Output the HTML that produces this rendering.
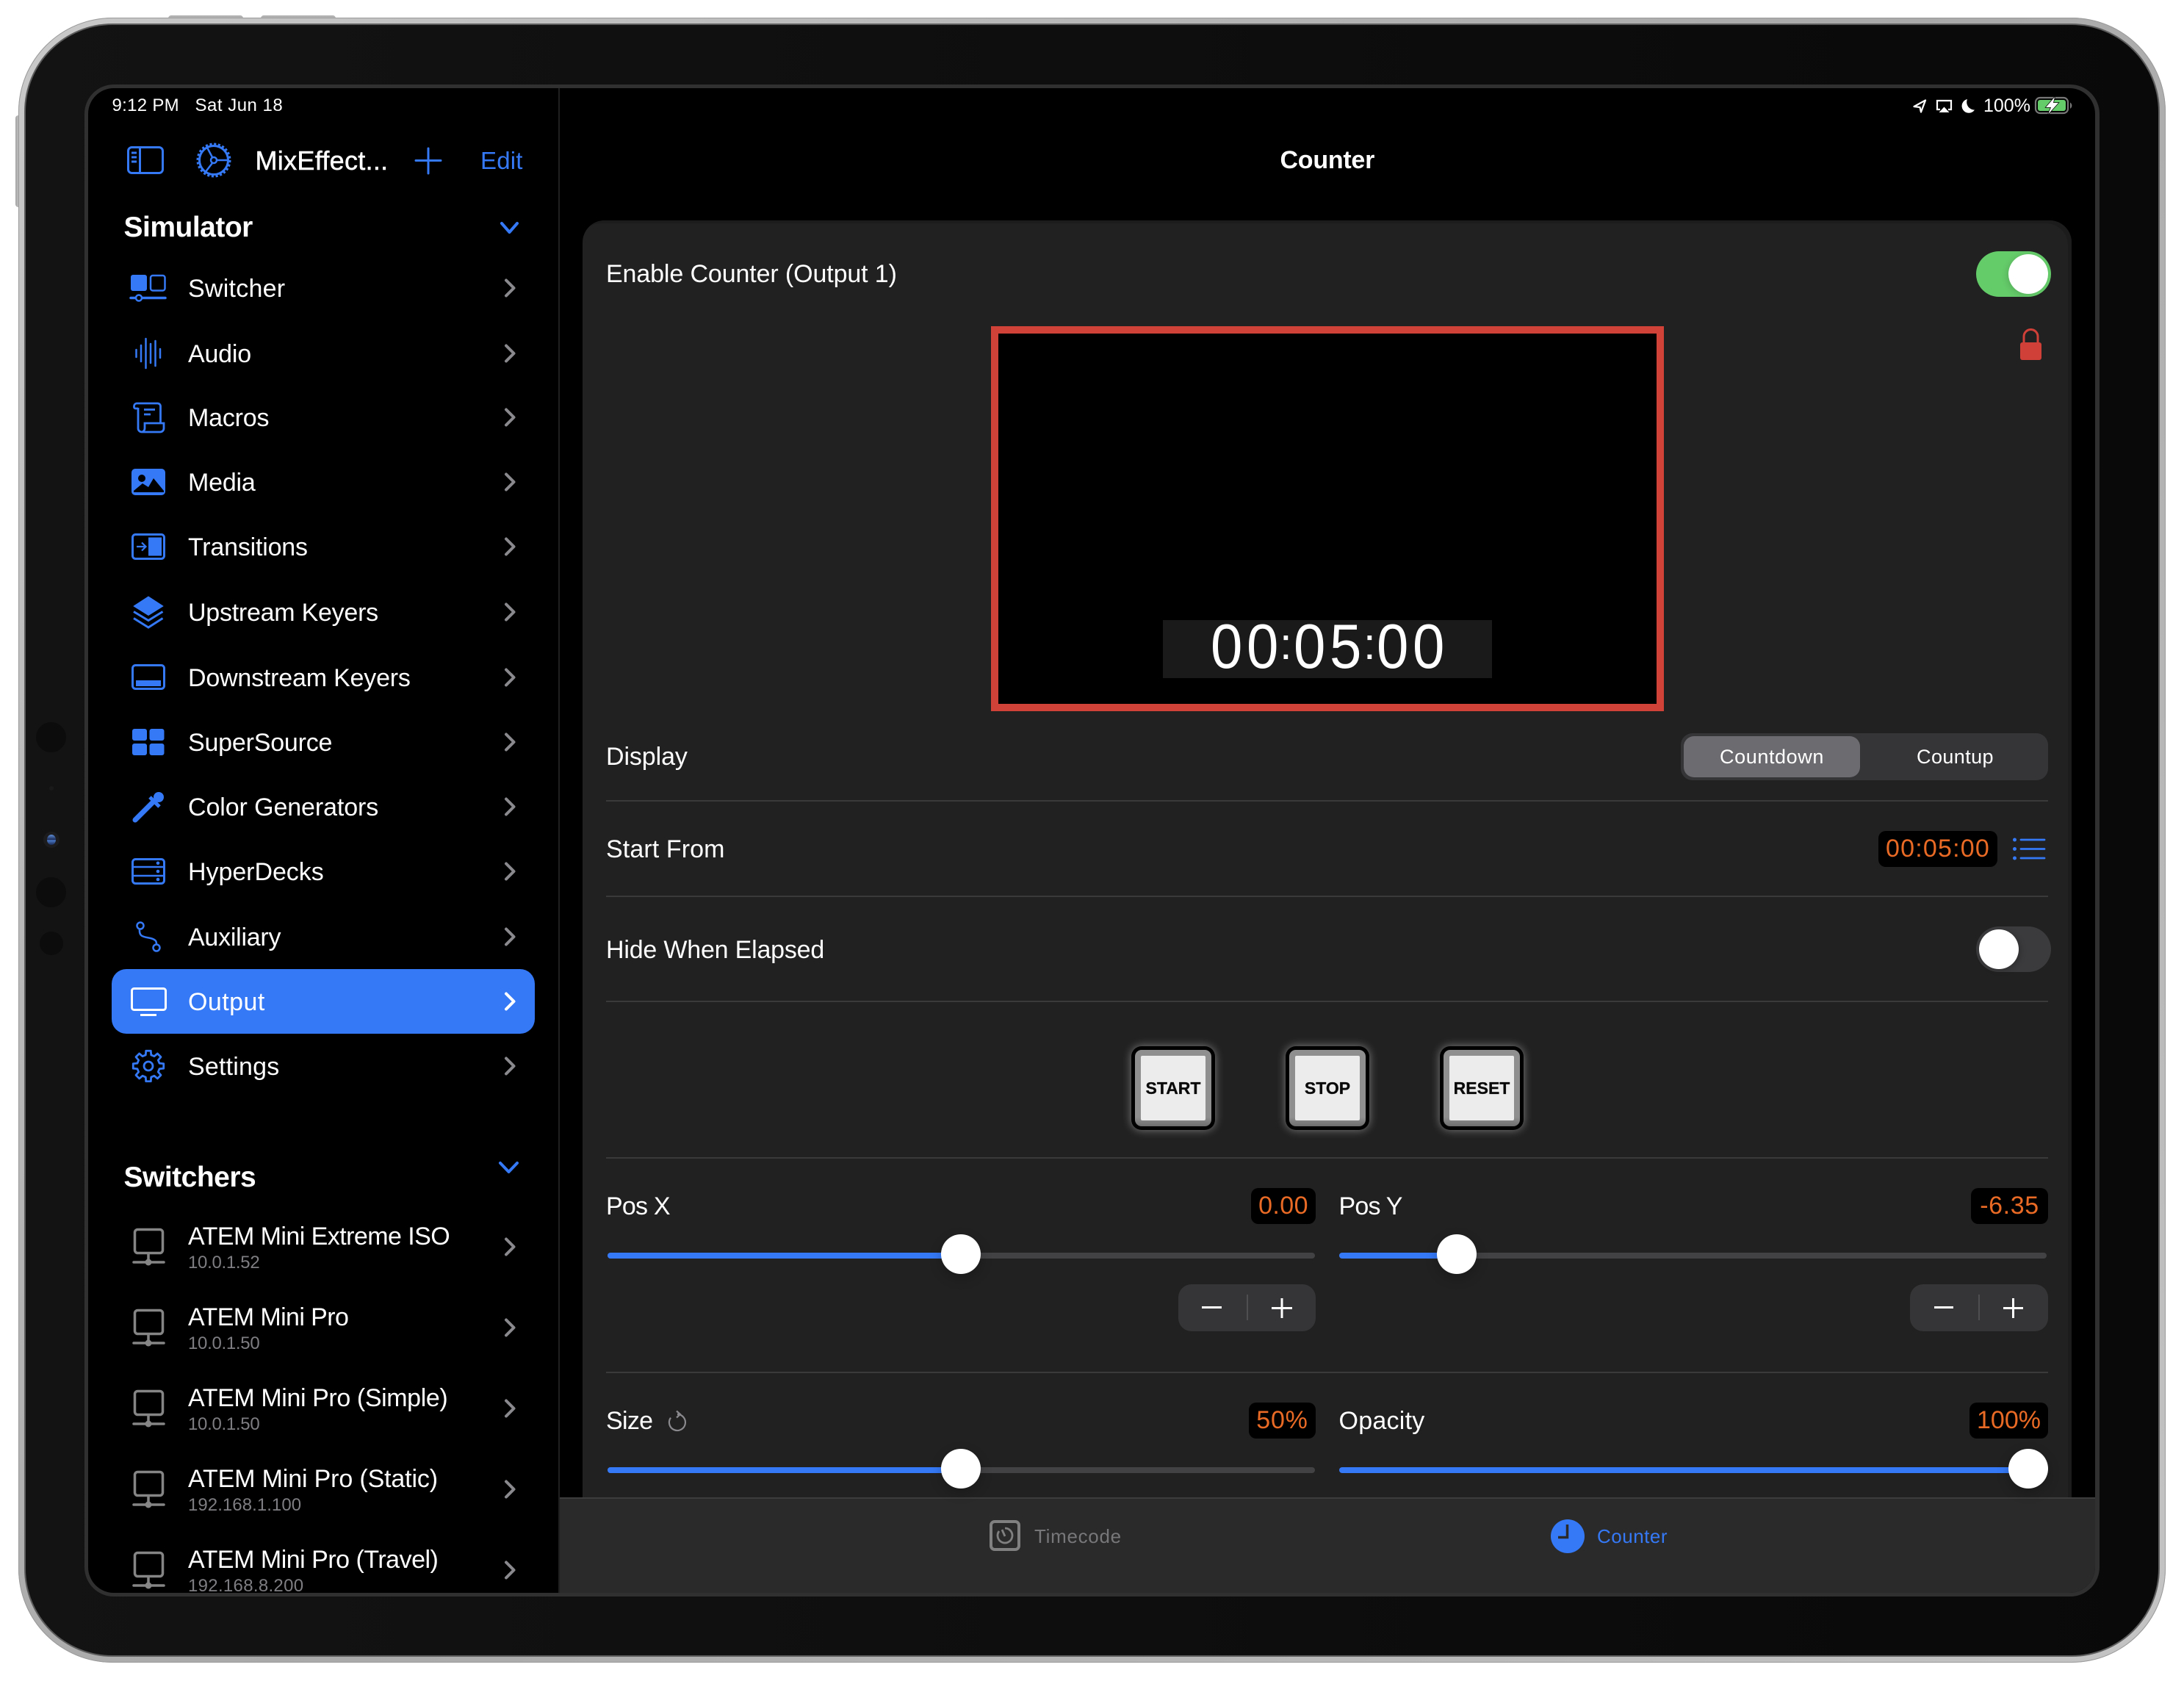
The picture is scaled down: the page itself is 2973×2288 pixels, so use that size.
<!DOCTYPE html>
<html lang="en"><head><meta charset="utf-8"><title>Counter</title>
<style>
html,body{margin:0;padding:0;background:#fff;width:2973px;height:2288px;overflow:hidden}
#r{position:relative;width:2973px;height:2288px;overflow:hidden;background:#fff;font-family:"Liberation Sans",sans-serif;color:#fff}
#r div,#r span{position:absolute;box-sizing:border-box}
.t{white-space:nowrap;line-height:40px;height:40px;font-size:34px}
.s{letter-spacing:-.2px;left:256px}
.sub{white-space:nowrap;line-height:30px;height:30px;font-size:24px;color:#7e7e82;left:256px;letter-spacing:-.3px}
.h{font-weight:700;font-size:39px;letter-spacing:-.5px;left:168.500px;line-height:50px;height:50px;white-space:nowrap}
.sep{height:2px;background:#3a3a3a;left:825px;width:1963px}
.f{background:#000;border-radius:10px;color:#e96a25;font-size:34px;height:49px;line-height:49px;text-align:center;white-space:nowrap}
.tr{height:8px;background:#424244;border-radius:4px}
.fl{height:8px;background:#3579f6;border-radius:4px 0 0 4px}
.k{width:54px;height:54px;background:#fff;border-radius:50%;box-shadow:0 6px 16px rgba(0,0,0,.22)}
.b{top:1424px;width:114px;height:114px;background:#000;border-radius:14px;box-shadow:0 0 12px rgba(255,255,255,.42)}
.b i{position:absolute;left:5px;top:5px;width:104px;height:104px;border-radius:9px;background:linear-gradient(#8f8f8f 88%,#6d6d6d);display:block}
.b b{position:absolute;left:13px;top:13px;width:88px;height:88px;background:#ececec;border-radius:2px;color:#0a0a0a;font-size:23px;line-height:88px;text-align:center;display:block;-webkit-text-stroke:.3px #0a0a0a}
.st{top:1748px;height:64px;background:#353537;border-radius:18px}
</style></head><body>
<div id="r">
<!-- hardware buttons -->
<div style="left:229px;top:21px;width:102px;height:7px;background:linear-gradient(#a8a8a8,#d0d0d0);border-radius:4px 4px 0 0"></div>
<div style="left:355px;top:21px;width:102px;height:7px;background:linear-gradient(#a8a8a8,#d0d0d0);border-radius:4px 4px 0 0"></div>
<div style="left:21px;top:157px;width:7px;height:125px;background:linear-gradient(90deg,#a4a4a4,#cfcfcf);border-radius:4px 0 0 4px"></div>
<!-- device shell -->
<div style="left:25px;top:24px;width:2923px;height:2239px;border-radius:128px;background:linear-gradient(135deg,#c9c9c9,#a9a9a9 50%,#c4c4c4);box-shadow:inset 0 0 0 1px #9a9a9a"></div>
<div style="left:33px;top:32px;width:2907px;height:2223px;border-radius:120px;background:#5c5c5c"></div>
<div style="left:35px;top:34px;width:2903px;height:2219px;border-radius:118px;background:linear-gradient(90deg,#131313,#0e0e0e 50%,#090909)"></div>
<!-- camera strip -->
<div style="left:49px;top:983px;width:41px;height:41px;border-radius:50%;background:#0c0c0c"></div>
<div style="left:67px;top:1070px;width:6px;height:6px;border-radius:50%;background:#1a1a1a"></div>
<div style="left:59px;top:1132px;width:22px;height:22px;border-radius:50%;background:#1c1c1e"></div>
<div style="left:64px;top:1136px;width:12px;height:14px;border-radius:50%;background:linear-gradient(#5f8fd8,#1b2b55 48%,#4a78c6 56%,#1b2b55)"></div>
<div style="left:49px;top:1194px;width:41px;height:41px;border-radius:50%;background:#0c0c0c"></div>
<div style="left:54px;top:1268px;width:32px;height:32px;border-radius:50%;background:#0c0c0c"></div>
<!-- screen ring -->
<div style="left:115px;top:115px;width:2743px;height:2058px;border-radius:40px;background:#303030"></div>
<div id="scr" style="left:120px;top:120px;width:2732px;height:2048px;border-radius:35px;background:#000;overflow:hidden">
  <div style="left:640px;top:0;width:2px;height:2048px;background:#1f1f1f"></div>
  <div style="left:32px;top:1199px;width:576px;height:88px;border-radius:20px;background:#3579f6"></div>
  <div style="left:673px;top:180px;width:2027px;height:1800px;border-radius:30px;background:#212121;box-shadow:inset -5px 4px 0 #1c1c1c"></div>
  <div style="left:642px;top:1918px;width:2090px;height:130px;background:#2a2a2a;border-top:2px solid #3c3c3c"></div>
</div>
<!-- preview -->
<div style="left:1349px;top:444px;width:916px;height:524px;background:#000;border:10px solid #d04138"></div>
<div style="left:1583px;top:844px;width:448px;height:79px;background:#1a1a1a"></div>
<!-- switches -->
<div style="left:2690px;top:342px;width:102px;height:62px;border-radius:31px;background:#65cc6a"></div>
<div style="left:2734px;top:346px;width:54px;height:54px;border-radius:50%;background:#fff;box-shadow:-3px 2px 8px rgba(0,0,0,.12)"></div>
<div style="left:2690px;top:1261px;width:102px;height:62px;border-radius:31px;background:#3b3b3d"></div>
<div style="left:2694px;top:1265px;width:54px;height:54px;border-radius:50%;background:#fff;box-shadow:3px 2px 8px rgba(0,0,0,.2)"></div>
<!-- segmented -->
<div style="left:2288px;top:998px;width:500px;height:64px;border-radius:16px;background:#353538"></div>
<div style="left:2292px;top:1002px;width:240px;height:56px;border-radius:14px;background:#6c6c70"></div>
<!-- separators -->
<div class="sep" style="top:1089px"></div>
<div class="sep" style="top:1219px"></div>
<div class="sep" style="top:1362px"></div>
<div class="sep" style="top:1575px"></div>
<div class="sep" style="top:1867px"></div>
<!-- action buttons -->
<div class="b" style="left:1540px"><i></i><b>START</b></div>
<div class="b" style="left:1750px"><i></i><b>STOP</b></div>
<div class="b" style="left:1960px"><i></i><b>RESET</b></div>
<!-- sliders -->
<div class="tr" style="left:827px;top:1705px;width:963px"></div>
<div class="fl" style="left:827px;top:1705px;width:470px"></div>
<div class="k" style="left:1281px;top:1680px"></div>
<div class="tr" style="left:1823px;top:1705px;width:963px"></div>
<div class="fl" style="left:1823px;top:1705px;width:150px"></div>
<div class="k" style="left:1956px;top:1680px"></div>
<div class="st" style="left:1604px;width:187px"></div>
<div class="st" style="left:2600px;width:188px"></div>
<div class="tr" style="left:827px;top:1997px;width:963px"></div>
<div class="fl" style="left:827px;top:1997px;width:470px"></div>
<div class="k" style="left:1281px;top:1972px"></div>
<div class="fl" style="left:1823px;top:1997px;width:930px"></div>
<div class="k" style="left:2734px;top:1972px"></div>
<!-- value fields -->
<div class="f" style="left:2557px;top:1131px;width:162px;letter-spacing:1.200px">00:05:00</div>
<div class="f" style="left:1703px;top:1617px;width:88px;letter-spacing:.4px">0.00</div>
<div class="f" style="left:2683px;top:1617px;width:105px;letter-spacing:.6px">-6.35</div>
<div class="f" style="left:1700px;top:1909px;width:91px;letter-spacing:.8px">50%</div>
<div class="f" style="left:2681px;top:1909px;width:107px">100%</div>
<!-- icons -->
<svg style="position:absolute;left:0;top:0" width="2973" height="2288" viewBox="0 0 2973 2288" fill="none">
<g stroke="#3579f6" stroke-width="3">
 <rect x="174.500" y="200.500" width="47" height="35" rx="5"/>
 <path d="M190.500 200V236M179 208H186M179 214H186M179 220H186"/>
 <circle cx="291" cy="218" r="19.500"/>
 <circle cx="291" cy="218" r="21.500" stroke-width="4" stroke-dasharray="3 2.630"/>
 <circle cx="291" cy="218" r="4" stroke-width="2.500"/>
 <path d="M295 218H311M289 214L281 199M289 222L279 235" stroke-width="2.500"/>
 <path d="M583 202V236M566 218.500H600" stroke-linecap="round"/>
 <path d="M683 304L693.500 316L704 304" stroke-width="4" stroke-linecap="round" stroke-linejoin="round"/>
 <path d="M681 1583L692.500 1595L704 1583" stroke-width="4" stroke-linecap="round" stroke-linejoin="round"/>
</g>
<!-- switcher -->
<rect x="178" y="374" width="22" height="22" rx="3" fill="#3579f6"/>
<rect x="205" y="375" width="19.500" height="20.500" rx="3" stroke="#3579f6" stroke-width="2.500"/>
<path d="M178 405.500H225" stroke="#3579f6" stroke-width="3.500" stroke-linecap="round"/>
<circle cx="189" cy="405.500" r="4" fill="#000" stroke="#3579f6" stroke-width="2.500"/>
<!-- audio -->
<path d="M185.500 476V486M192 470V492M198.500 461V501M205 468V494M211.500 464V498M218 475V487" stroke="#3579f6" stroke-width="2.500" stroke-linecap="round"/>
<!-- macros -->
<path d="M188 555V583A5 5 0 0 0 193 588H218A5 5 0 0 0 223 583V576H197V583A5 5 0 0 1 193 588M218.500 576V553A4 4 0 0 0 214.500 549H186A4 4 0 0 0 182.500 553V554A2 2 0 0 0 184.500 556H188M196 557.500H211M196 564H205" stroke="#3579f6" stroke-width="2.800"/>
<!-- media -->
<rect x="179" y="638" width="46" height="36" rx="5" fill="#3579f6"/>
<circle cx="193" cy="651" r="5" fill="#000"/>
<path d="M182 668L194 658L202 663L209 651L223 668V670H182Z" fill="#000"/>
<!-- transitions -->
<rect x="180.500" y="727.500" width="43" height="33" rx="4" stroke="#3579f6" stroke-width="3"/>
<rect x="202" y="731.500" width="18" height="25" fill="#3579f6"/>
<path d="M186 744H198M193 738.500L198.500 744L193 749.500" stroke="#3579f6" stroke-width="2.200"/>
<!-- upstream -->
<path d="M202 812L222 825L202 837.500L182 825Z" fill="#3579f6" stroke="#3579f6" stroke-linejoin="round"/>
<path d="M182 832.500L202 844.500L221.500 832.500M182 841.500L202 854L221.500 841.500" stroke="#3579f6" stroke-width="3"/>
<!-- downstream -->
<rect x="180.500" y="905.500" width="43" height="32" rx="4" stroke="#3579f6" stroke-width="3"/>
<rect x="185" y="926" width="34" height="8" fill="#3579f6"/>
<!-- supersource -->
<g fill="#3579f6"><rect x="180" y="992" width="20" height="16" rx="3"/><rect x="203.500" y="992" width="20" height="16" rx="3"/><rect x="180" y="1012" width="20" height="16" rx="3"/><rect x="203.500" y="1012" width="20" height="16" rx="3"/></g>
<!-- eyedropper -->
<path d="M184 1116L207 1093" stroke="#3579f6" stroke-width="7" stroke-linecap="round"/>
<circle cx="216" cy="1085" r="7" fill="#3579f6"/>
<path d="M204 1085L217 1098" stroke="#3579f6" stroke-width="5"/>
<!-- hyperdecks -->
<rect x="180.500" y="1169.500" width="43" height="33" rx="4" stroke="#3579f6" stroke-width="3"/>
<path d="M180 1180H224M180 1192H224" stroke="#3579f6" stroke-width="2.500"/>
<g fill="#3579f6"><circle cx="215" cy="1174.800" r="2.300"/><circle cx="215" cy="1186" r="2.300"/><circle cx="215" cy="1197" r="2.300"/></g>
<!-- auxiliary -->
<circle cx="191" cy="1260" r="4.500" stroke="#3579f6" stroke-width="2.500"/>
<circle cx="213" cy="1290" r="4.500" stroke="#3579f6" stroke-width="2.500"/>
<path d="M190 1265C189 1276 197 1275 205 1277C212 1279 213 1281 213 1285" stroke="#3579f6" stroke-width="2.500"/>
<!-- output -->
<rect x="179.500" y="1345.500" width="46" height="29" rx="3" stroke="#fff" stroke-width="3"/>
<path d="M191 1381.500H213" stroke="#fff" stroke-width="3"/>
<!-- settings gear -->
<g transform="translate(202 1451)" stroke="#3579f6" stroke-width="2.800" stroke-linejoin="round">
 <polygon points="-3.750,-15.040 -3.290,-20.740 3.290,-20.740 3.750,-15.040 7.980,-13.290 12.340,-16.990 16.990,-12.340 13.290,-7.980 15.040,-3.750 20.740,-3.290 20.740,3.290 15.040,3.750 13.290,7.980 16.990,12.340 12.340,16.990 7.980,13.290 3.750,15.040 3.290,20.740 -3.290,20.740 -3.750,15.040 -7.980,13.290 -12.340,16.990 -16.990,12.340 -13.290,7.980 -15.040,3.750 -20.740,3.290 -20.740,-3.290 -15.040,-3.750 -13.290,-7.980 -16.990,-12.340 -12.340,-16.990 -7.980,-13.290"/>
 <circle r="6"/>
</g>
<!-- chevrons -->
<path d="M689 381.500L699.500 392L689 402.500M689 470.500L699.500 481L689 491.500M689 557.500L699.500 568L689 578.500M689 645.500L699.500 656L689 666.500M689 733.500L699.500 744L689 754.500M689 822.500L699.500 833L689 843.500M689 911.500L699.500 922L689 932.500M689 999.500L699.500 1010L689 1020.500M689 1087.500L699.500 1098L689 1108.500M689 1175.500L699.500 1186L689 1196.500M689 1264.500L699.500 1275L689 1285.500M689 1440.500L699.500 1451L689 1461.500M689 1686.500L699.500 1697L689 1707.500M689 1796.500L699.500 1807L689 1817.500M689 1906.500L699.500 1917L689 1927.500M689 2016.500L699.500 2027L689 2037.500M689 2126.500L699.500 2137L689 2147.500" stroke="#8a8a8e" stroke-width="4" stroke-linecap="round" stroke-linejoin="round"/>
<path d="M689 1352.500L699.500 1363L689 1373.500" stroke="#fff" stroke-width="4" stroke-linecap="round" stroke-linejoin="round"/>
<!-- network icons -->
<g stroke="#858585" stroke-width="3.500">
 <rect x="183.500" y="1673.500" width="38" height="32" rx="4"/><path d="M202 1706V1718M182 1718H223" stroke-linecap="round"/>
 <rect x="183.500" y="1783.500" width="38" height="32" rx="4"/><path d="M202 1816V1828M182 1828H223" stroke-linecap="round"/>
 <rect x="183.500" y="1893.500" width="38" height="32" rx="4"/><path d="M202 1926V1938M182 1938H223" stroke-linecap="round"/>
 <rect x="183.500" y="2003.500" width="38" height="32" rx="4"/><path d="M202 2036V2048M182 2048H223" stroke-linecap="round"/>
 <rect x="183.500" y="2113.500" width="38" height="32" rx="4"/><path d="M202 2146V2158M182 2158H223" stroke-linecap="round"/>
</g>
<g fill="#858585"><circle cx="202" cy="1718" r="4.500"/><circle cx="202" cy="1828" r="4.500"/><circle cx="202" cy="1938" r="4.500"/><circle cx="202" cy="2048" r="4.500"/><circle cx="202" cy="2158" r="4.500"/></g>
<!-- status icons -->
<path d="M2621 136.500L2605.500 145L2613.500 146L2615 152.500Z" stroke="#fff" stroke-width="2.300" stroke-linejoin="round"/>
<path d="M2641 149H2637V137H2656V149H2652" stroke="#fff" stroke-width="2.200"/>
<path d="M2646.500 145.500L2653.500 153H2639.500Z" fill="#fff"/>
<path d="M2678 135A9.500 9.500 0 1 0 2688 149.500A10.500 10.500 0 0 1 2678 135Z" fill="#fff"/>
<rect x="2771" y="133" width="44" height="21" rx="6" stroke="#777" stroke-width="2.200"/>
<rect x="2774" y="136" width="38" height="15" rx="3" fill="#65cc6a"/>
<path d="M2818 139.500A5 5 0 0 1 2818 148Z" fill="#777"/>
<path d="M2797 132L2785 146H2792L2788 155.500L2802 140H2795Z" fill="#fff" stroke="#000" stroke-width="1.500" paint-order="stroke"/>
<!-- lock -->
<rect x="2750" y="466" width="29" height="24" rx="3" fill="#d04038"/>
<path d="M2755 467V458A9.500 9.500 0 0 1 2774 458V467" stroke="#d04038" stroke-width="3"/>
<!-- list icon -->
<g fill="#3579f6"><circle cx="2742.500" cy="1143" r="2.500"/><circle cx="2742.500" cy="1155.500" r="2.500"/><circle cx="2742.500" cy="1168" r="2.500"/></g>
<path d="M2751 1143H2783M2751 1155.500H2783M2751 1168H2783" stroke="#3579f6" stroke-width="2.800" stroke-linecap="round"/>
<!-- steppers -->
<path d="M1636 1779.500H1663M1731 1780.500H1759M1745 1767V1794M2633 1779.500H2659M2727 1780.500H2754M2740.500 1767V1794" stroke="#fff" stroke-width="3"/>
<path d="M1698 1762V1797M2694 1762V1797" stroke="#565658" stroke-width="1.500"/>
<!-- reset icon -->
<path d="M922 1925A11 11 0 1 1 913 1929.600M921 1920.500L926 1925L921 1929.500" stroke="#8a8a8e" stroke-width="2.200"/>
<!-- tab icons -->
<rect x="1349" y="2071" width="38" height="38" rx="5" stroke="#808080" stroke-width="4"/>
<path d="M1368 2080A10 10 0 1 1 1360 2084M1368 2091L1364 2082" stroke="#808080" stroke-width="2.800"/>
<circle cx="2134" cy="2091" r="23" fill="#3579f6"/>
<path d="M2133.500 2075V2092.500H2121" stroke="#2a2a2a" stroke-width="3.500"/>
<!-- counter digits, real text -->
<g fill="#fff" font-family="'Liberation Sans',sans-serif">
 <text transform="translate(0 909) scale(1 1.100)" font-size="78" x="1648 1697 1761 1810 1874 1923">000500</text>
 <text y="897" font-size="60" x="1742">:</text>
 <text y="897" font-size="60" x="1856">:</text>
</g>
</svg>
<!-- text, clipped to the screen -->
<div style="left:0;top:0;width:2973px;height:2168px;overflow:hidden">
 <div class="t" style="left:152.500px;top:124px;font-size:24px;letter-spacing:.3px">9:12 PM</div>
 <div class="t" style="left:265.500px;top:124px;font-size:24px;letter-spacing:.5px">Sat Jun 18</div>
 <div class="t" style="left:347.500px;top:199px;font-size:36px;letter-spacing:.3px;-webkit-text-stroke:.5px #fff">MixEffect...</div>
 <div class="t" style="left:654px;top:199px;color:#3579f6;font-size:33px;letter-spacing:.2px">Edit</div>
 <div class="t h" style="top:285px">Simulator</div>
 <div class="t s" style="top:373px;letter-spacing:.25px">Switcher</div>
 <div class="t s" style="top:462px">Audio</div>
 <div class="t s" style="top:549px">Macros</div>
 <div class="t s" style="top:637px">Media</div>
 <div class="t s" style="top:725px">Transitions</div>
 <div class="t s" style="top:814px;letter-spacing:-.25px">Upstream Keyers</div>
 <div class="t s" style="top:903px;letter-spacing:-.2px">Downstream Keyers</div>
 <div class="t s" style="top:991px">SuperSource</div>
 <div class="t s" style="top:1079px;letter-spacing:-.1px">Color Generators</div>
 <div class="t s" style="top:1167px;letter-spacing:-.05px">HyperDecks</div>
 <div class="t s" style="top:1256px;letter-spacing:-.25px">Auxiliary</div>
 <div class="t s" style="top:1344px;letter-spacing:.45px">Output</div>
 <div class="t s" style="top:1432px;letter-spacing:.2px">Settings</div>
 <div class="t h" style="top:1578px">Switchers</div>
 <div class="t s" style="top:1663px;letter-spacing:-.55px">ATEM Mini Extreme ISO</div><div class="sub" style="top:1704px">10.0.1.52</div>
 <div class="t s" style="top:1773px;letter-spacing:-.6px">ATEM Mini Pro</div><div class="sub" style="top:1814px">10.0.1.50</div>
 <div class="t s" style="top:1883px;letter-spacing:-.4px">ATEM Mini Pro (Simple)</div><div class="sub" style="top:1924px">10.0.1.50</div>
 <div class="t s" style="top:1993px;letter-spacing:-.15px">ATEM Mini Pro (Static)</div><div class="sub" style="top:2034px;letter-spacing:.05px">192.168.1.100</div>
 <div class="t s" style="top:2103px;letter-spacing:-.5px">ATEM Mini Pro (Travel)</div><div class="sub" style="top:2144px;letter-spacing:.3px">192.168.8.200</div>
</div>
<div class="t" style="left:2700px;top:124px;font-size:25px">100%</div>
<div class="t" style="left:1742.500px;top:198px;font-weight:700;letter-spacing:-.25px">Counter</div>
<div class="t" style="left:825px;top:353px;letter-spacing:-.12px">Enable Counter (Output 1)</div>
<div class="t" style="left:825px;top:1010px;letter-spacing:-.1px">Display</div>
<div class="t" style="left:2292px;top:1010px;width:240px;text-align:center;font-size:27px;letter-spacing:.6px">Countdown</div>
<div class="t" style="left:2532px;top:1010px;width:256px;text-align:center;font-size:27px;letter-spacing:.4px;padding-left:3px">Countup</div>
<div class="t" style="left:825px;top:1136px;letter-spacing:.1px">Start From</div>
<div class="t" style="left:825px;top:1273px;letter-spacing:-.2px">Hide When Elapsed</div>
<div class="t" style="left:825px;top:1622px;letter-spacing:-.8px">Pos X</div>
<div class="t" style="left:1822.500px;top:1622px;letter-spacing:-.8px">Pos Y</div>
<div class="t" style="left:825px;top:1914px;letter-spacing:-.7px">Size</div>
<div class="t" style="left:1822.500px;top:1914px;letter-spacing:.25px">Opacity</div>
<div class="t" style="left:1408px;top:2071px;font-size:26px;letter-spacing:.7px;color:#77777a">Timecode</div>
<div class="t" style="left:2174px;top:2071px;font-size:26px;letter-spacing:.5px;color:#3579f6">Counter</div>
</div>
</body></html>
